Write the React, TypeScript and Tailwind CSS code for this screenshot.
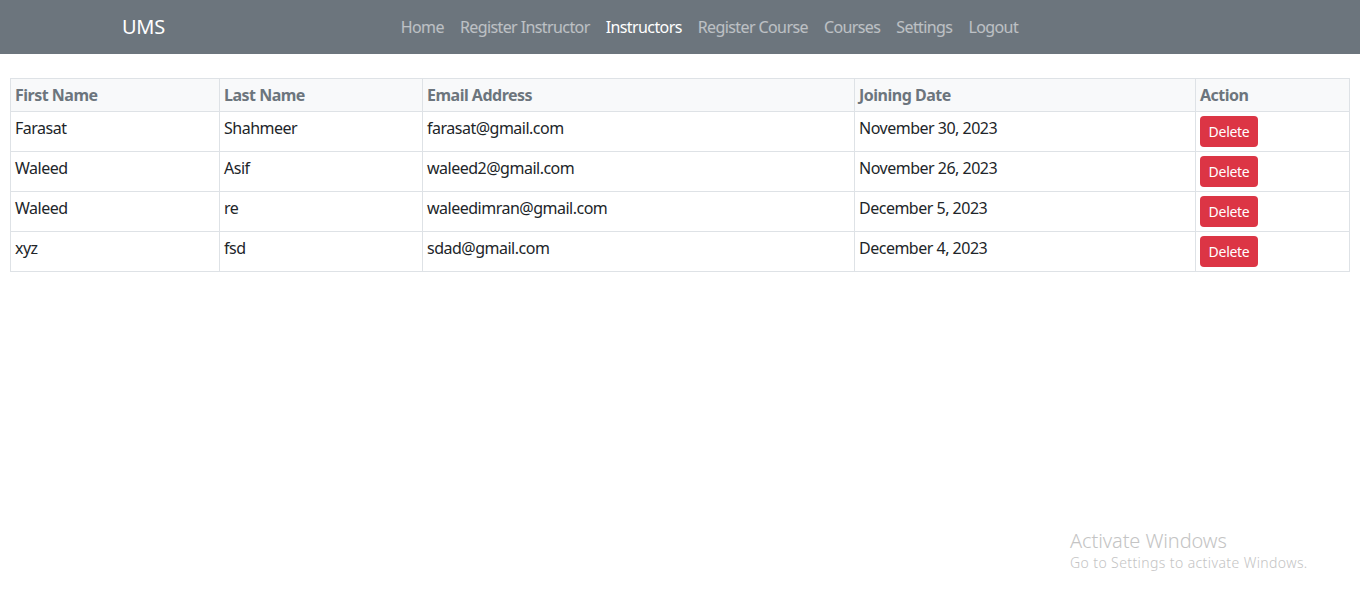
import React from 'react';

const instructors = [
  { first: 'Farasat', last: 'Shahmeer', email: 'farasat@gmail.com', date: 'November 30, 2023' },
  { first: 'Waleed', last: 'Asif', email: 'waleed2@gmail.com', date: 'November 26, 2023' },
  { first: 'Waleed', last: 're', email: 'waleedimran@gmail.com', date: 'December 5, 2023' },
  { first: 'xyz', last: 'fsd', email: 'sdad@gmail.com', date: 'December 4, 2023' },
];

const links = ['Home', 'Register Instructor', 'Instructors', 'Register Course', 'Courses', 'Settings', 'Logout'];

const App: React.FC = () => {
  return (
    <div className="relative min-h-[605px] bg-white text-[#212529] font-['Noto_Sans','Open_Sans',sans-serif]">
      <nav className="h-[54px] bg-[#6c757d]">
        <div className="mx-auto flex h-full w-[1140px] items-center px-3">
          <a className="mr-4 text-[20px] leading-[30px] tracking-[-0.3px] text-white">UMS</a>
          <ul className="mx-auto flex items-center">
            {links.map((l) => (
              <li key={l}>
                <a
                  className={`block px-2 py-2 text-[16px] leading-6 tracking-[-0.6px] ${
                    l === 'Instructors' ? 'text-white' : 'text-white/55'
                  }`}
                >
                  {l}
                </a>
              </li>
            ))}
          </ul>
        </div>
      </nav>

      <div className="px-[10px] pt-6">
        <table className="w-full border-collapse border border-[#dee2e6] text-[16px] leading-6 tracking-[-0.5px]">
          <colgroup>
            <col className="w-[209px]" />
            <col className="w-[203px]" />
            <col className="w-[432px]" />
            <col className="w-[341px]" />
            <col />
          </colgroup>
          <thead>
            <tr className="bg-[#f8f9fa] text-[#6c757d]">
              {['First Name', 'Last Name', 'Email Address', 'Joining Date', 'Action'].map((h) => (
                <th key={h} className="border border-[#dee2e6] p-1 text-left align-top font-bold">
                  {h}
                </th>
              ))}
            </tr>
          </thead>
          <tbody>
            {instructors.map((r, i) => (
              <tr key={i}>
                <td className="border border-[#dee2e6] p-1 align-top">{r.first}</td>
                <td className="border border-[#dee2e6] p-1 align-top">{r.last}</td>
                <td className="border border-[#dee2e6] p-1 align-top">{r.email}</td>
                <td className="border border-[#dee2e6] p-1 align-top">{r.date}</td>
                <td className="border border-[#dee2e6] p-1 align-top">
                  <button className="h-[31px] w-[58px] rounded bg-[#dc3545] text-[14px] leading-5 tracking-[-0.3px] text-white">
                    Delete
                  </button>
                </td>
              </tr>
            ))}
          </tbody>
        </table>
      </div>

      <div className="absolute left-[1070px] top-[529px] text-[#c4c4c4]">
        <div className="text-[20px] font-light leading-6 tracking-[-0.1px]">Activate Windows</div>
        <div className="text-[14px] font-light leading-5 tracking-[0.4px]">Go to Settings to activate Windows.</div>
      </div>
    </div>
  );
};

export default App;
